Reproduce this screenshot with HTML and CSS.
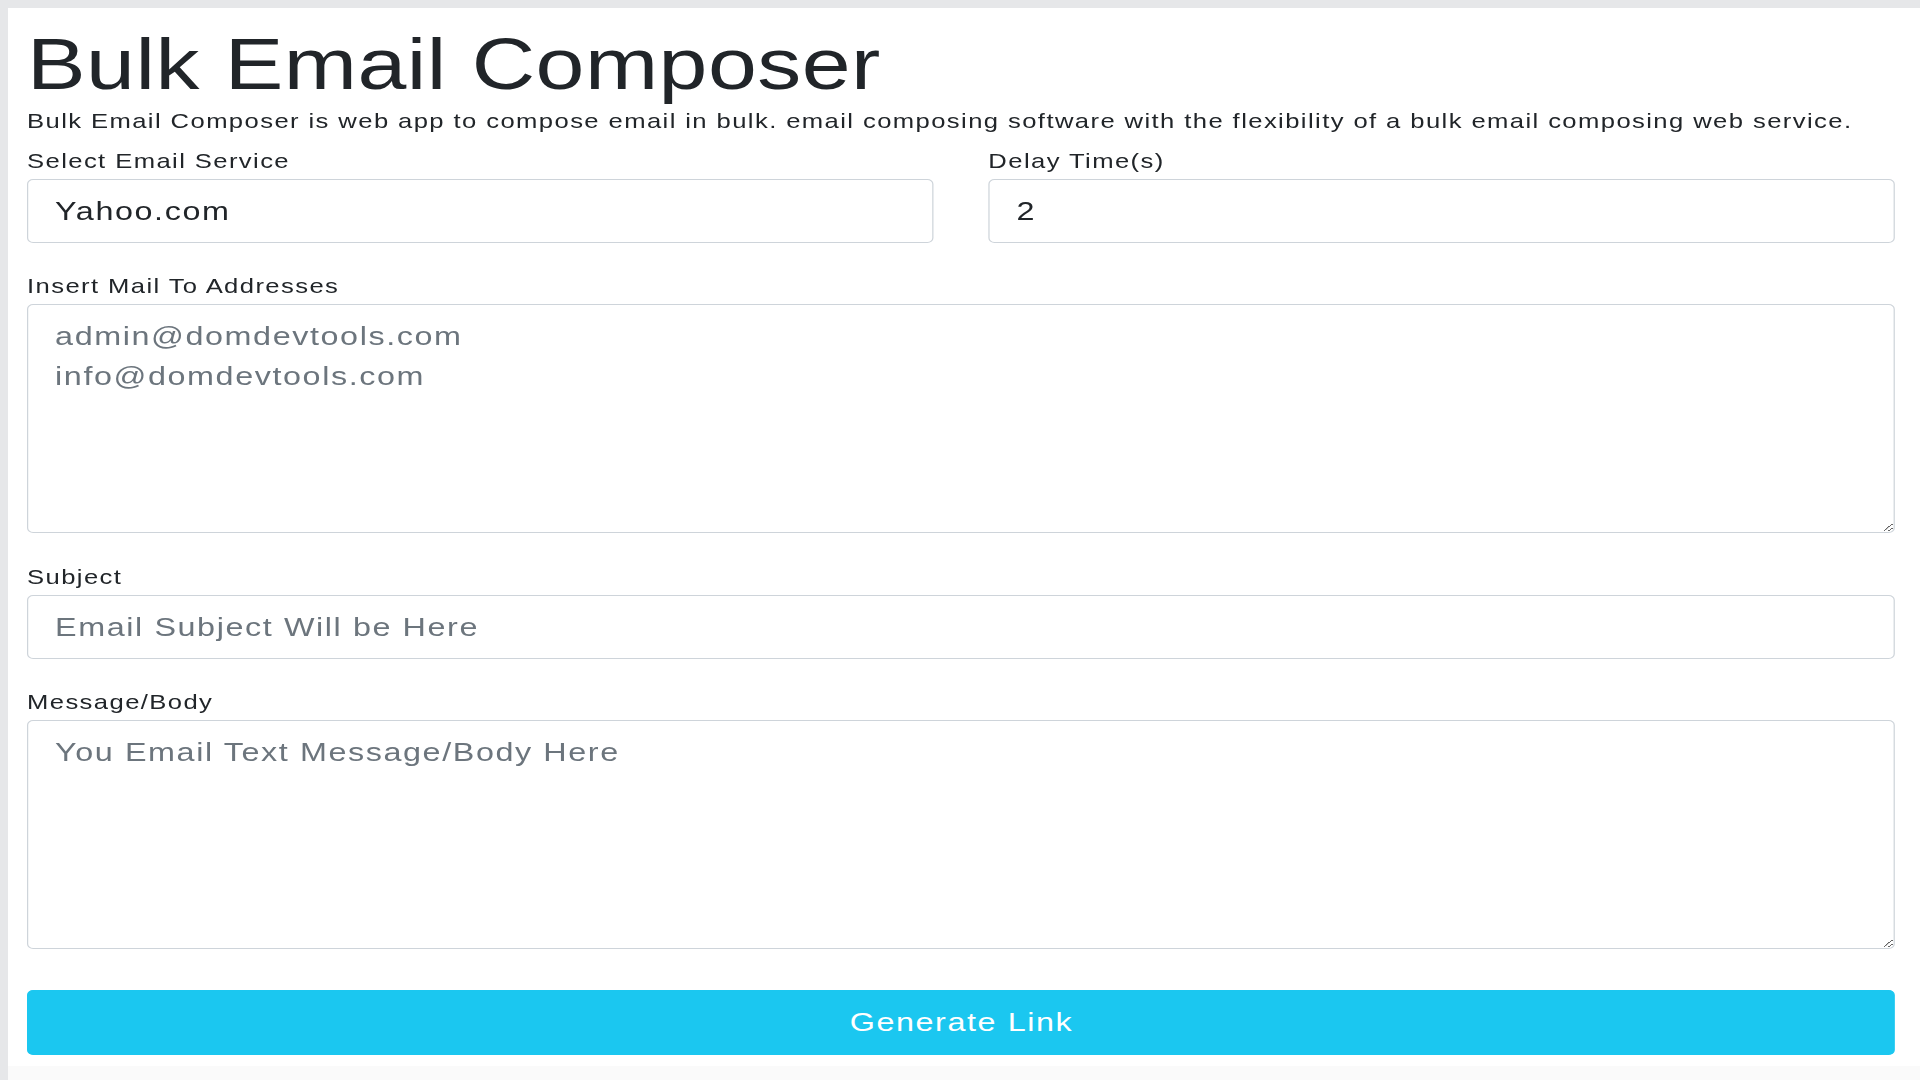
FILE: index.html
```html
<!DOCTYPE html>
<html lang="en">
<head>
<meta charset="utf-8">
<title>Bulk Email Composer</title>
<link rel="stylesheet" href="styles.css">
</head>
<body>
<div class="page">
  <main class="panel">
    <div class="sheet">
      <h1 class="title">Bulk Email Composer</h1>
      <p class="lead">Bulk Email Composer is web app to compose email in bulk. email composing software with the flexibility of a bulk email composing web service.</p>
      <form class="form">
        <div class="row">
          <div class="group">
            <label class="label" for="service">Select Email Service</label>
            <select class="control select" id="service">
              <option>Yahoo.com</option>
              <option>Gmail.com</option>
              <option>Outlook.com</option>
            </select>
          </div>
          <div class="group">
            <label class="label" for="delay">Delay Time(s)</label>
            <input class="control" id="delay" type="text" value="2">
          </div>
        </div>
        <div class="group group-area">
          <label class="label" for="to">Insert Mail To Addresses</label>
          <textarea class="control area muted" id="to">admin@domdevtools.com
info@domdevtools.com</textarea>
        </div>
        <div class="group">
          <label class="label" for="subject">Subject</label>
          <input class="control" id="subject" type="text" placeholder="Email Subject Will be Here">
        </div>
        <div class="group group-area">
          <label class="label" for="body">Message/Body</label>
          <textarea class="control area" id="body" placeholder="You Email Text Message/Body Here"></textarea>
        </div>
        <button class="btn" type="button">Generate Link</button>
      </form>
    </div>
  </main>
  <div class="foot"></div>
</div>
</body>
</html>
```

FILE: styles.css
```css
* { box-sizing: border-box; }

html, body {
  margin: 0;
  padding: 0;
  height: 100%;
}

body {
  background: #e6e7e9;
  font-family: "Liberation Sans", Arial, sans-serif;
  color: #212529;
  overflow: hidden;
}

.page {
  min-height: 100vh;
  display: flex;
  flex-direction: column;
  padding: 8px 0 0 8px;
}

.panel {
  background: #ffffff;
  padding: 16px 0 11px 19px;
}

/* the captured page is stretched horizontally by 1.22 */
.sheet {
  width: 1531px;
  transform: scaleX(1.22);
  transform-origin: 0 0;
}

.foot {
  flex: 1;
  background: #fafafa;
}

.title {
  margin: 0 0 1px 0;
  font-size: 72px;
  line-height: 80px;
  font-weight: 400;
  letter-spacing: 0.4px;
  white-space: nowrap;
}

.lead {
  margin: 0 0 11px 0;
  font-size: 21px;
  line-height: 32px;
  letter-spacing: 1.15px;
  white-space: nowrap;
}

.form {
  display: flex;
  flex-direction: column;
}

.row {
  display: grid;
  grid-template-columns: 1fr 1fr;
  column-gap: 45px;
}

.group {
  margin-bottom: 30px;
}

.group-area {
  margin-bottom: 31px;
}

.label {
  display: block;
  font-size: 21px;
  line-height: 26px;
  letter-spacing: 1.15px;
  margin-bottom: 5px;
}

.control {
  display: block;
  width: 100%;
  height: 64px;
  margin: 0;
  border: 1px solid #ced4da;
  border-radius: 5px;
  padding: 11px 22px;
  font-family: "Liberation Sans", Arial, sans-serif;
  font-size: 26.5px;
  line-height: 40px;
  letter-spacing: 1.3px;
  color: #212529;
  background: #ffffff;
  outline: none;
}

.select {
  appearance: none;
  -webkit-appearance: none;
  padding-top: 0;
  padding-bottom: 0;
}

.area {
  height: 229px;
  resize: both;
}

.muted {
  color: #6c757d;
}

.control::placeholder {
  color: #6c757d;
  opacity: 1;
}

.btn {
  margin-top: 10px;
  width: 100%;
  height: 65px;
  border: 1px solid #1bc7f0;
  border-radius: 5px;
  background: #1bc7f0;
  color: #ffffff;
  font-family: "Liberation Sans", Arial, sans-serif;
  font-size: 26.5px;
  letter-spacing: 1.3px;
  padding: 0 0 0 1px;
  cursor: pointer;
}
```
